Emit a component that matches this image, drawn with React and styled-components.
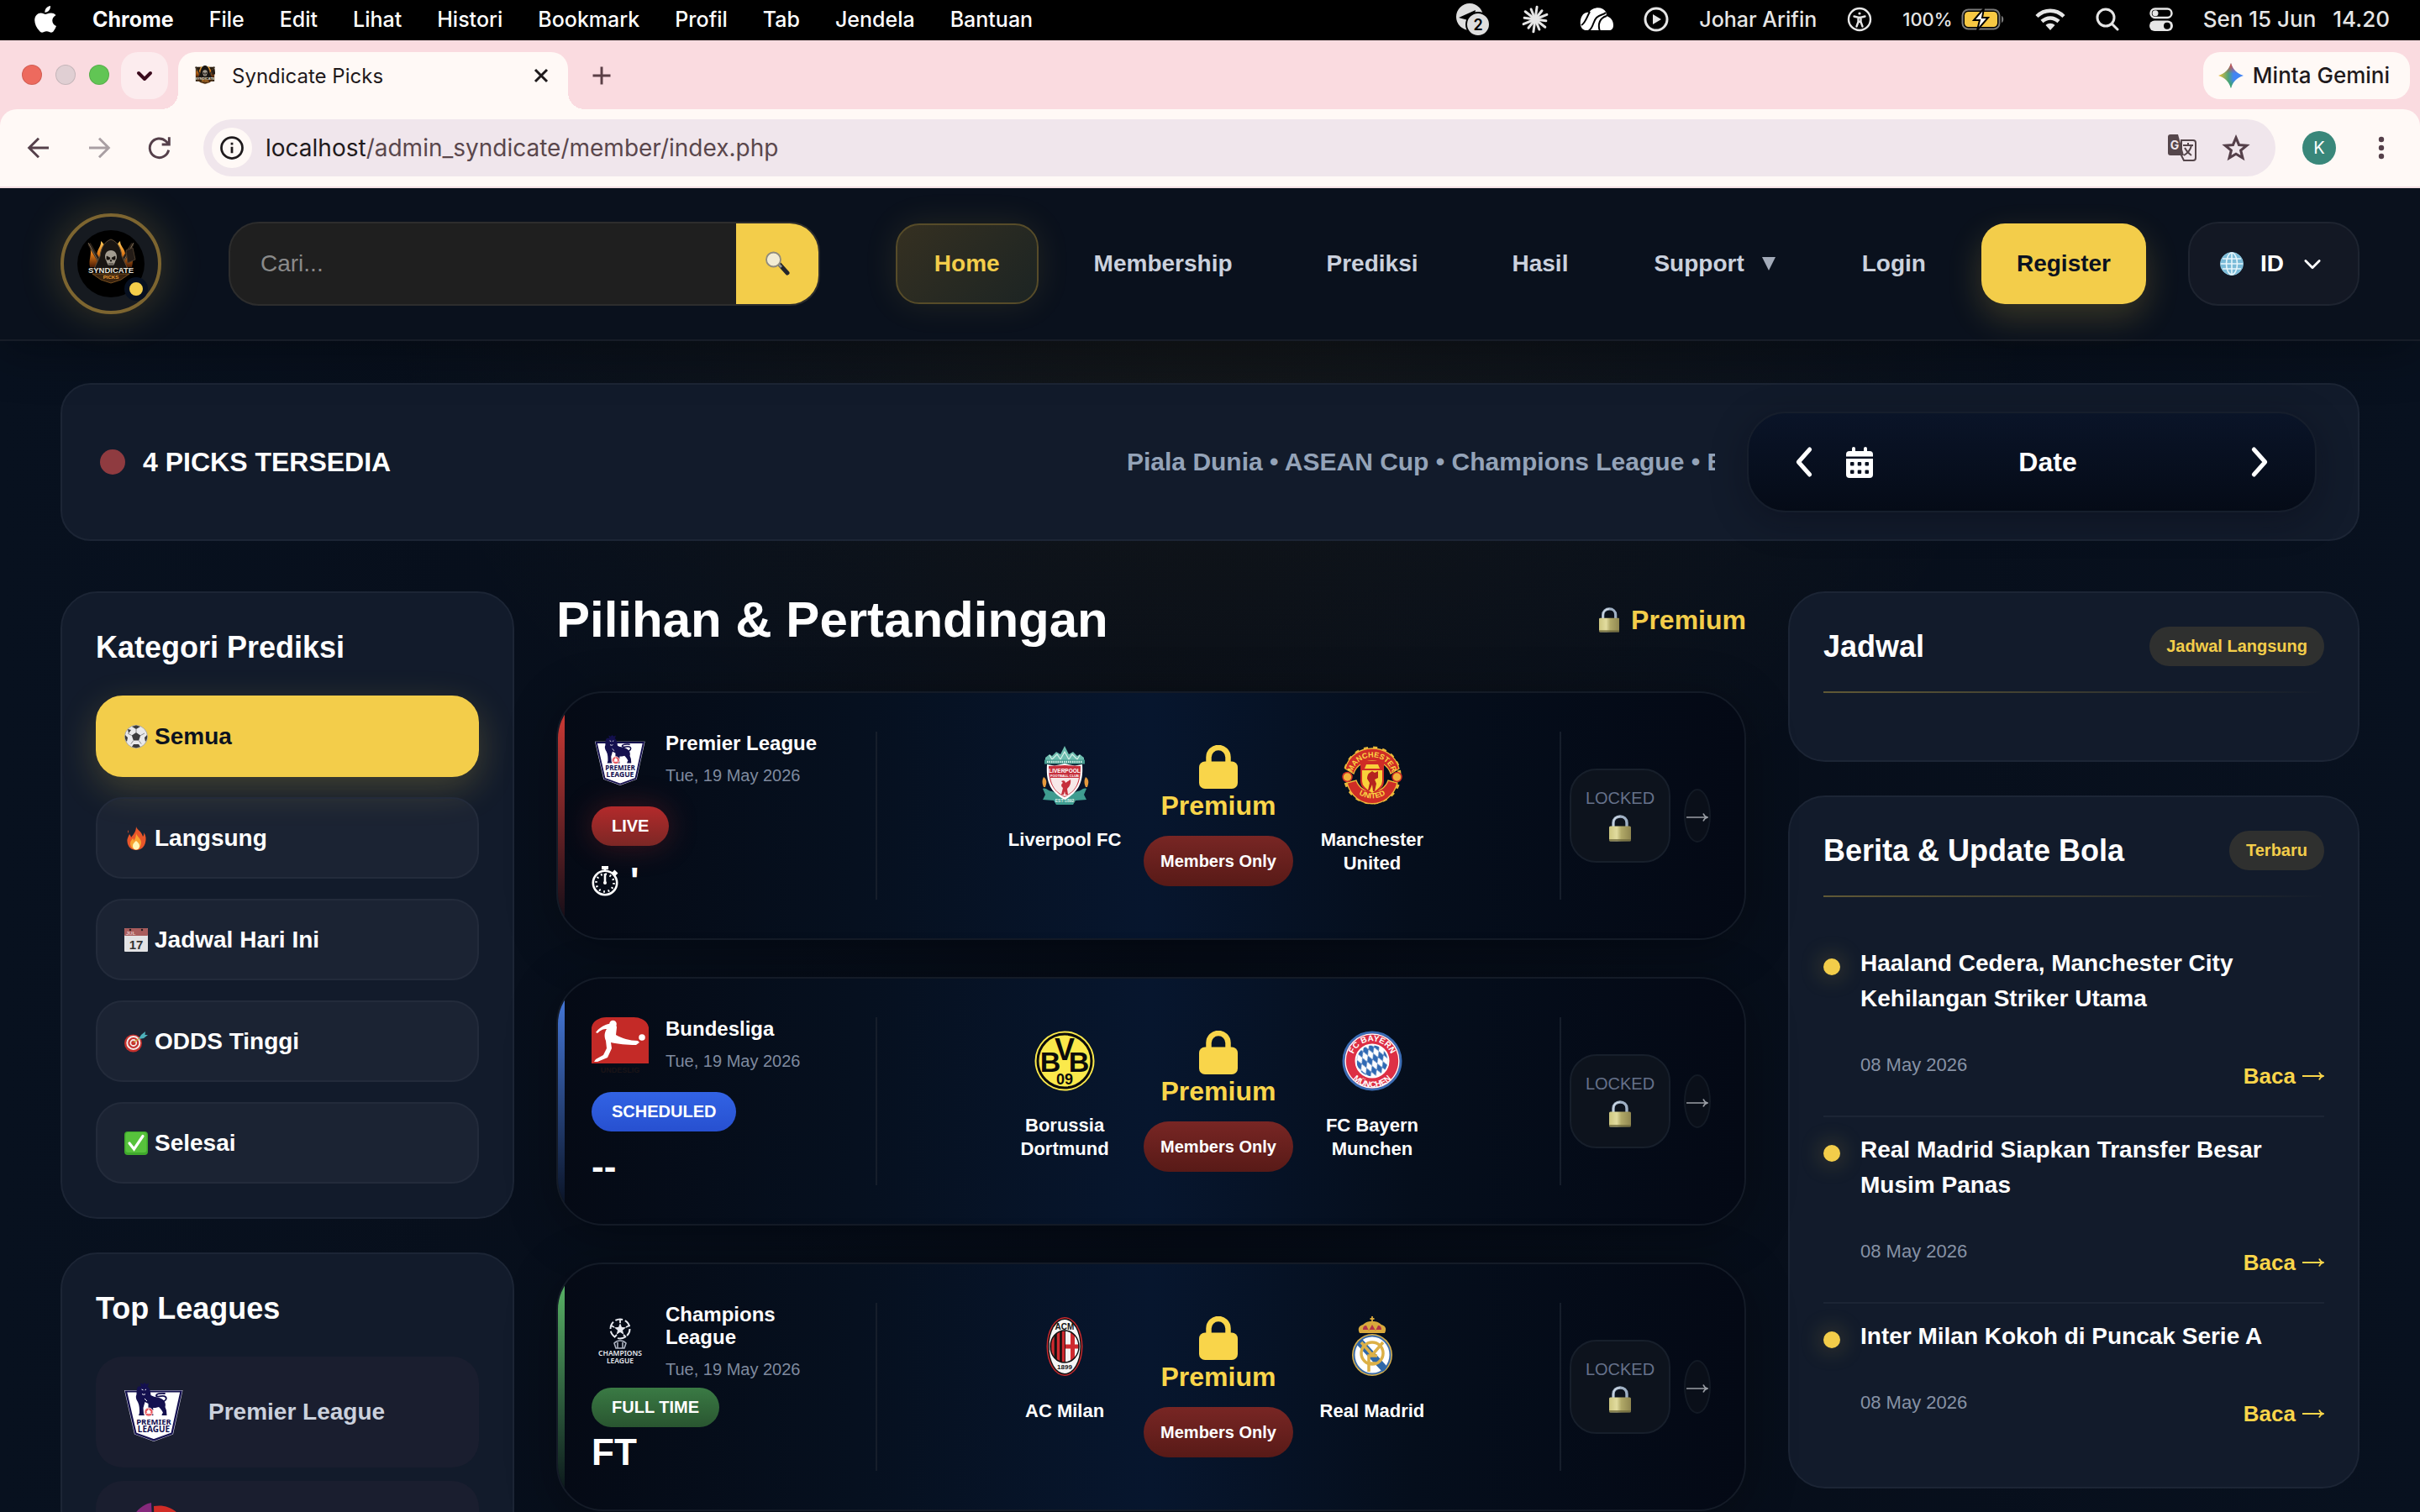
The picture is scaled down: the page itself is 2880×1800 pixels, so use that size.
import React from "react";
import styled, { createGlobalStyle, css } from "styled-components";

const sans = `"Liberation Sans", Arial, sans-serif`;
const system = `Inter, "Noto Sans", sans-serif`;
const gold = "#f3cd4a";

const GlobalStyle = createGlobalStyle`
  *, *::before, *::after { box-sizing: border-box; }
  body { margin: 0; background: #070e1a; font-family: ${sans}; color: #fff; }
  button, input { font: inherit; color: inherit; margin: 0; }
  h1, h2, h3, p, ul { margin: 0; padding: 0; }
  li { list-style: none; }
  a { color: inherit; text-decoration: none; }
  svg { display: block; flex: none; }
`;

/* ---------- desktop menu bar ---------- */

const Screen = styled.div`
  height: 100vh;
  display: flex;
  flex-direction: column;
  overflow: hidden;
`;

const MenuBar = styled.nav`
  flex: none;
  height: 48px;
  display: flex;
  align-items: center;
  justify-content: space-between;
  padding: 0 36px 2px 40px;
  background: #000;
  color: #fff;
  font: 500 25px/46px ${system};
`;

const MenuGroup = styled.div`
  display: flex;
  align-items: center;
  gap: 42px;
`;

const TrayGroup = styled.div`
  display: flex;
  align-items: center;
  gap: 36px;
  color: #e6e6e6;
`;

const MenuItem = styled.span`
  font-weight: ${(p) => (p.$strong ? 700 : 500)};
`;

const Battery = styled.span`
  display: flex;
  align-items: center;
  gap: 10px;
  font-size: 22px;
`;

const Clock = styled.span`
  display: flex;
  gap: 20px;
  font-size: 26px;
`;

/* ---------- browser window ---------- */

const TabStrip = styled.div`
  flex: none;
  height: 82px;
  display: flex;
  align-items: flex-start;
  padding: 14px 12px 0 26px;
  background: #fadbe0;
  font-family: ${system};
  color: #1f1a1c;
`;

const Lights = styled.div`
  height: 54px;
  display: flex;
  align-items: center;
  gap: 16px;
`;

const Light = styled.span`
  width: 24px;
  height: 24px;
  border-radius: 50%;
  border: 1px solid rgba(0, 0, 0, 0.12);
  background: ${(p) => p.$color};
`;

const TabSearch = styled.button`
  width: 56px;
  height: 56px;
  margin: 0 12px 0 14px;
  padding: 0;
  display: grid;
  place-items: center;
  border: 0;
  border-radius: 20px;
  background: #fcecee;
  color: #3a0a1c;
`;

const Tab = styled.div`
  position: relative;
  width: 464px;
  height: 68px;
  display: flex;
  align-items: center;
  padding: 0 20px 12px;
  border-radius: 20px 20px 0 0;
  background: #fff9f6;
  font-size: 24px;

  &::before,
  &::after {
    content: "";
    position: absolute;
    bottom: 0;
    width: 20px;
    height: 20px;
  }
  &::before {
    right: 100%;
    background: radial-gradient(circle at 0 0, transparent 20px, #fff9f6 20px);
  }
  &::after {
    left: 100%;
    background: radial-gradient(circle at 100% 0, transparent 20px, #fff9f6 20px);
  }
`;

const TabTitle = styled.span`
  flex: 1;
  padding-left: 20px;
`;

const PlainButton = styled.button`
  padding: 0;
  border: 0;
  background: none;
  display: grid;
  place-items: center;
`;

const NewTab = styled(PlainButton)`
  width: 56px;
  height: 56px;
  margin-left: 12px;
  color: #5b3f46;
`;

const Gemini = styled.button`
  height: 56px;
  margin-left: auto;
  padding: 0 24px 0 18px;
  display: flex;
  align-items: center;
  gap: 11px;
  border: 0;
  border-radius: 20px;
  background: #fff9f6;
  font: 500 26px/56px ${system};
`;

const ToolbarBack = styled.div`
  flex: none;
  background: #fadbe0;
`;

const Toolbar = styled.div`
  height: 94px;
  display: flex;
  align-items: center;
  padding: 0 42px 0 30px;
  border-radius: 20px 20px 0 0;
  border-bottom: 2px solid #f3dfe2;
  background: #fff9f6;
  color: #55404a;
  font-family: ${system};
`;

const ToolbarNav = styled.div`
  display: flex;
  gap: 40px;
  margin-right: 36px;
`;

const Omnibox = styled.div`
  flex: 1;
  height: 68px;
  display: flex;
  align-items: center;
  gap: 16px;
  padding: 0 30px 0 10px;
  border-radius: 34px;
  background: #f0e6ec;
`;

const SiteInfo = styled(PlainButton)`
  width: 48px;
  height: 48px;
  border-radius: 50%;
  background: #fff9f6;
  color: #1f1a1c;
`;

const Address = styled.p`
  flex: 1;
  font: 400 28px/36px ${system};
  color: #5a474c;
  b {
    font-weight: 400;
    color: #1f1a1c;
  }
`;

const OmniIcons = styled.div`
  display: flex;
  gap: 30px;
`;

const Avatar = styled.span`
  width: 40px;
  height: 40px;
  margin: 0 50px 0 32px;
  border-radius: 50%;
  background: #39877a;
  color: #fff;
  font-size: 20px;
  line-height: 40px;
  text-align: center;
`;

/* ---------- site header ---------- */

const Site = styled.div`
  flex: 1;
  min-height: 0;
  overflow: hidden;
  background:
    radial-gradient(ellipse 1000px 800px at 50% 90px, rgba(243, 205, 74, 0.06), transparent 100%),
    linear-gradient(90deg, #08111f, #060c17 50%, #08111f);
`;

const Header = styled.header`
  position: relative;
  height: 182px;
  display: flex;
  align-items: center;
  padding: 0 72px;
  border-bottom: 2px solid #171d28;
  background: #0a111d;
  box-shadow: 0 10px 60px rgba(0, 0, 0, 0.35);
`;

const LogoRing = styled.a`
  position: relative;
  width: 120px;
  height: 120px;
  margin-right: 80px;
  display: grid;
  place-items: center;
  border: 4px solid #7d6530;
  border-radius: 50%;
  background: #161a20;
  box-shadow: 0 0 50px rgba(243, 205, 74, 0.22);
`;

const OnlineDot = styled.span`
  position: absolute;
  right: 12px;
  bottom: 12px;
  width: 28px;
  height: 28px;
  border: 6px solid #071020;
  border-radius: 50%;
  background: ${gold};
`;

const Search = styled.form`
  flex: 1;
  min-width: 300px;
  height: 100px;
  display: flex;
  margin-right: 90px;
  overflow: hidden;
  border: 2px solid #2d2d2d;
  border-radius: 36px;
  background: #1f1f1f;
`;

const SearchInput = styled.input`
  flex: 1;
  min-width: 0;
  padding: 0 36px;
  border: 0;
  outline: 0;
  background: none;
  font-size: 28px;
  &::placeholder {
    color: #8a8a8a;
    opacity: 1;
  }
`;

const SearchButton = styled(PlainButton)`
  width: 98px;
  background: ${gold};
`;

const Nav = styled.nav`
  display: flex;
  gap: 20px;
  margin-right: 50px;
`;

const navItem = css`
  height: 96px;
  display: flex;
  align-items: center;
  border: 2px solid transparent;
  border-radius: 28px;
  color: #cbd1dd;
  font-size: 28px;
  font-weight: 700;
`;

const NavLink = styled.a`
  ${navItem}
  padding: 0 44px;
  ${(p) =>
    p.$active &&
    css`
      border-color: #574c29;
      background: linear-gradient(135deg, #353021, #1c2423);
      box-shadow: 0 0 40px rgba(243, 205, 74, 0.1);
      color: ${gold};
    `}
`;

const NavMenu = styled.button`
  ${navItem}
  padding: 0 34px;
  gap: 20px;
  background: none;
`;

const Register = styled.a`
  ${navItem}
  padding: 0 40px;
  background: ${gold};
  box-shadow: 0 16px 40px rgba(243, 205, 74, 0.2);
  color: #0b1220;
`;

const Language = styled.button`
  height: 100px;
  display: flex;
  align-items: center;
  padding: 0 40px 0 36px;
  border: 2px solid #1e2430;
  border-radius: 36px;
  background: #131824;
  font-size: 28px;
  font-weight: 700;
  gap: 20px;
`;

/* ---------- page body ---------- */

const Page = styled.main`
  padding: 50px 72px;
`;

const panel = css`
  border: 2px solid #1c2535;
  background: #121b2b;
`;

const StatusBar = styled.section`
  ${panel}
  height: 188px;
  display: flex;
  align-items: center;
  margin-bottom: 60px;
  padding: 0 49px 0 45px;
  border-radius: 36px;
`;

const LiveDot = styled.span`
  width: 30px;
  height: 30px;
  margin-right: 21px;
  border-radius: 50%;
  background: #8f3b40;
`;

const StatusText = styled.h2`
  font-size: 32px;
`;

const Ticker = styled.p`
  flex: 0 0 700px;
  margin: 0 38px 0 auto;
  overflow: hidden;
  white-space: nowrap;
  color: #94a3b8;
  font-size: 30px;
  font-weight: 700;
  line-height: 44px;
`;

const DateBox = styled.div`
  width: 678px;
  height: 120px;
  display: flex;
  align-items: center;
  padding: 0 46px;
  border: 2px solid #161e2c;
  border-radius: 46px;
  background: linear-gradient(#0a1428, #050b17);
  box-shadow: 0 10px 40px rgba(8, 10, 20, 0.35);
`;

const DateButton = styled.button`
  flex: 1;
  display: flex;
  align-items: center;
  padding: 0 24px 0 30px;
  border: 0;
  background: none;
  font-size: 32px;
  font-weight: 700;
`;

const DateLabel = styled.span`
  flex: 1;
  text-align: center;
`;

const Columns = styled.div`
  display: grid;
  grid-template-columns: 540px minmax(0, 1fr) 680px;
  gap: 50px;
  align-items: start;
`;

const Stack = styled.div`
  display: flex;
  flex-direction: column;
  gap: 40px;
`;

const Panel = styled.section`
  ${panel}
  padding: 40px;
  border-radius: 44px;
`;

const PanelTitle = styled.h2`
  font-size: 36px;
  line-height: 50px;
  margin-bottom: 32px;
`;

const CategoryList = styled.div`
  display: flex;
  flex-direction: column;
  gap: 24px;
`;

const Category = styled.button`
  height: 97px;
  display: flex;
  align-items: center;
  gap: 8px;
  padding: 0 32px;
  border: 2px solid #232b3b;
  border-radius: 32px;
  background: rgba(255, 255, 255, 0.04);
  font-size: 28px;
  font-weight: 700;
  ${(p) =>
    p.$active &&
    css`
      border-color: ${gold};
      background: ${gold};
      box-shadow: 0 14px 44px rgba(243, 205, 74, 0.22);
      color: #0b1220;
    `}
`;

const LeagueList = styled.div`
  display: flex;
  flex-direction: column;
  gap: 16px;
`;

const LeagueLink = styled.a`
  height: 132px;
  display: flex;
  align-items: center;
  gap: 30px;
  padding: 0 34px;
  border-radius: 32px;
  background: #1a1e2f;
  color: #cbd1dd;
  font-size: 28px;
  font-weight: 700;
`;

/* ---------- matches ---------- */

const MatchHead = styled.div`
  height: 68px;
  display: flex;
  align-items: center;
  justify-content: space-between;
  margin-bottom: 51px;
`;

const MatchHeading = styled.h1`
  font-size: 60px;
  line-height: 68px;
`;

const PremiumTag = styled.p`
  display: flex;
  align-items: center;
  gap: 14px;
  color: ${gold};
  font-size: 32px;
  font-weight: 700;
`;

const MatchList = styled.div`
  display: flex;
  flex-direction: column;
  gap: 44px;
`;

const MatchCard = styled.article`
  position: relative;
  height: 296px;
  display: grid;
  grid-template-columns: 340px minmax(0, 1fr) 180px;
  padding: 46px 40px;
  overflow: hidden;
  border: 2px solid #141b27;
  border-radius: 56px;
  background: linear-gradient(90deg, #050a15, #06101f 25%, #07162e 50%, #050e1c 72%, #040915);
  box-shadow: 0 10px 60px rgba(0, 0, 0, 0.3);

  &::before {
    content: "";
    position: absolute;
    inset: 0 auto 0 0;
    width: 8px;
    background: linear-gradient(${(p) => p.$accent}, transparent);
  }
`;

const MatchInfo = styled.div`
  display: flex;
  flex-direction: column;
  align-items: flex-start;
  justify-content: space-between;
  border-right: 2px solid #161e2b;
`;

const LeagueRow = styled.div`
  min-height: 68px;
  display: flex;
  gap: 20px;
`;

const LeagueBadge = styled.span`
  width: 68px;
  display: grid;
  place-items: center;
`;

const LeagueName = styled.h3`
  width: 190px;
  margin-bottom: 12px;
  font-size: 24px;
  line-height: 27px;
`;

const MatchDate = styled.p`
  color: #7f8a9f;
  font-size: 20px;
  line-height: 26px;
`;

const statusFill = {
  live: "linear-gradient(#b32a2b, #7c2725)",
  scheduled: "linear-gradient(#3263e4, #2750d0)",
  done: "linear-gradient(#3a7a44, #295530)",
};

const Status = styled.span`
  height: 47px;
  padding: 0 24px;
  border-radius: 24px;
  background: ${(p) => statusFill[p.$kind]};
  box-shadow: ${(p) => (p.$kind === "live" ? "0 0 36px rgba(190, 40, 40, 0.3)" : "none")};
  font-size: 20px;
  font-weight: 700;
  line-height: 47px;
`;

const MatchTime = styled.p`
  display: flex;
  align-items: center;
  gap: 12px;
  font-size: 44px;
  font-weight: 700;
  line-height: 44px;
`;

const Versus = styled.div`
  display: flex;
  align-self: center;
  justify-content: center;
  gap: 24px;
`;

const Team = styled.div`
  width: 140px;
  display: flex;
  flex-direction: column;
  align-items: center;
  gap: 27px;
  font-size: 22px;
  font-weight: 700;
  line-height: 28px;
  text-align: center;
`;

const Gate = styled.div`
  display: flex;
  flex-direction: column;
  align-items: center;
  color: #f9d54a;
  font-size: 32px;
  font-weight: 700;
  line-height: 40px;
`;

const MembersOnly = styled.a`
  height: 60px;
  margin-top: 16px;
  padding: 0 20px;
  border-radius: 30px;
  background: linear-gradient(#782624, #581a17);
  color: #fff;
  font-size: 20px;
  line-height: 60px;
`;

const MatchSide = styled.div`
  display: flex;
  align-items: center;
  justify-content: space-between;
  padding-left: 10px;
  border-left: 2px solid #161e2b;
`;

const LockedBox = styled.div`
  width: 120px;
  height: 112px;
  display: flex;
  flex-direction: column;
  align-items: center;
  justify-content: center;
  gap: 7px;
  padding-bottom: 4px;
  border: 2px solid #171f2b;
  border-radius: 32px;
  background: #0d131d;
  color: #65718a;
  font-size: 20px;
  line-height: 26px;
`;

const OpenMatch = styled.a`
  width: 32px;
  height: 64px;
  display: grid;
  place-items: center;
  padding-top: 4px;
  border: 2px solid #131a25;
  border-radius: 50%;
  background: #0a0f19;
  color: #9a9ea5;
`;

/* ---------- schedule and news ---------- */

const PanelHead = styled.div`
  display: flex;
  align-items: center;
  justify-content: space-between;
  margin-bottom: 40px;
  padding-bottom: 30px;
  border-bottom: 2px solid;
  border-image: linear-gradient(90deg, rgba(243, 205, 74, 0.35), transparent) 1;
`;

const PanelHeadTitle = styled.h2`
  font-size: 36px;
  line-height: 46px;
`;

const Chip = styled.span`
  height: 47px;
  padding: 0 20px;
  border-radius: 24px;
  background: #2f302f;
  color: ${gold};
  font-size: 20px;
  font-weight: 700;
  line-height: 47px;
`;

const NewsItem = styled.li`
  display: grid;
  grid-template-columns: 20px 1fr;
  column-gap: 24px;
  padding: 18px 0 16px;
  border-bottom: 2px solid #1c2535;
  &:last-child {
    border-bottom: 0;
  }
`;

const Bullet = styled.span`
  width: 20px;
  height: 20px;
  margin-top: 15px;
  border-radius: 50%;
  background: ${gold};
  box-shadow: 0 0 28px rgba(243, 205, 74, 0.35);
`;

const NewsTitle = styled.h3`
  font-size: 28px;
  line-height: 42px;
`;

const NewsMeta = styled.div`
  display: flex;
  align-items: flex-start;
  justify-content: space-between;
  margin-top: 40px;
`;

const NewsDate = styled.time`
  color: #8792a5;
  font-size: 22px;
  line-height: 36px;
`;

const ReadLink = styled.a`
  display: flex;
  align-items: center;
  gap: 8px;
  color: #f9d54a;
  font-size: 26px;
  font-weight: 700;
  line-height: 62px;
`;

/* ---------- drawings ---------- */

const AppleMark = () => (
  <svg width="28" height="32" viewBox="0 0 28 32" fill="#fff">
    <path d="M20 0c.3 2.200-.6 4.200-1.800 5.600-1.200 1.400-3 2.400-4.800 2.200-.3-2 .7-4.200 1.800-5.400C16.500 1 18.500.1 20 0z" />
    <path d="M26.500 11.100c-3 1.900-4.300 4.100-4.200 6.700.1 3 1.800 5 4.700 6.300-.8 2.300-2 4.300-3.400 6.100-1.200 1.500-2.600 1.800-4.300 1.100-3.200-1.300-4.600-1.200-7.600 0-1.800.7-3.200.4-4.600-1.200C1.200 23.800-.8 15 3.600 10.700c2.600-2.500 5.500-2.700 8.800-1.100 1.200.5 2.300.4 3.500 0 4.200-1.700 8-1.500 10.600 1.500z" />
  </svg>
);

const ChatBadge = () => (
  <svg width="42" height="38" viewBox="0 0 42 38">
    <circle cx="17" cy="16" r="16" fill="#dedede" />
    <path d="M4 17l20-9-4 18-5-6z" fill="#000" />
    <circle cx="27" cy="25" r="14" fill="#dedede" stroke="#000" strokeWidth="2" />
    <text x="27" y="32" textAnchor="middle" fontFamily="Inter, sans-serif" fontSize="18" fontWeight="600" fill="#000">2</text>
  </svg>
);

const Burst = () => (
  <svg width="34" height="34" viewBox="-17 -17 34 34" stroke="#e6e6e6" strokeWidth="3" strokeLinecap="round">
    {Array.from({ length: 12 }, (_, i) => (
      <line key={i} x1="0" y1="0" x2="0" y2={i % 2 ? -13 : -15} transform={`rotate(${i * 30 + 8})`} />
    ))}
  </svg>
);

const CloudMark = () => (
  <svg width="40" height="28" viewBox="0 0 40 28">
    <path d="M8 27C2 27 0 21 1 15 2 9 6 5 11 6 15-1 27-2 31 5c1 2 1 4 0 5 6 1 9 6 9 11 0 4-2 6-5 6z" fill="#fff" />
    <path d="M10 28c7-4 5-11 10-16 4-4 8-3 11-6M24 28c-3-8 0-16 8-18M2 21C7 18 8 12 12 5" fill="none" stroke="#000" strokeWidth="2" />
  </svg>
);

const PlayMark = () => (
  <svg width="30" height="30" viewBox="0 0 30 30">
    <circle cx="15" cy="15" r="13" fill="none" stroke="#e6e6e6" strokeWidth="3" />
    <path d="M11 9l10 6-10 6z" fill="#e6e6e6" />
  </svg>
);

const Accessibility = () => (
  <svg width="30" height="30" viewBox="0 0 30 30" stroke="#e6e6e6" fill="none" strokeWidth="2.400" strokeLinecap="round">
    <circle cx="15" cy="15" r="13" />
    <circle cx="15" cy="8" r="1.600" fill="#e6e6e6" stroke="none" />
    <path d="M8.500 11.500l5 1.200h3l5-1.200M13.500 13v5l-2 5.500M16.500 13v5l2 5.500M13.500 18h3" />
  </svg>
);

const BatteryMark = () => (
  <svg width="52" height="26" viewBox="0 0 52 26">
    <rect x="1.500" y="1.500" width="44" height="23" rx="7" fill="none" stroke="#7a7a7a" strokeWidth="2" />
    <rect x="4" y="4" width="39" height="18" rx="4.500" fill="#f7c843" />
    <path d="M48 9c3 1 3 7 0 8z" fill="#7a7a7a" />
    <path d="M27 0L15 14h7l-3 12 13-15h-7z" fill="#fff" stroke="#000" strokeWidth="2" />
  </svg>
);

const Wifi = () => (
  <svg width="36" height="27" viewBox="0 0 36 27" fill="none" stroke="#e6e6e6" strokeWidth="4.500">
    <path d="M2 9.500c9-9 23-9 32 0M8 15.500c6-5.500 14-5.500 20 0" />
    <path d="M18 26l-5.500-6c3-3 8-3 11 0z" fill="#e6e6e6" stroke="none" />
  </svg>
);

const Spotlight = () => (
  <svg width="28" height="28" viewBox="0 0 28 28" fill="none" stroke="#e6e6e6" strokeWidth="3" strokeLinecap="round">
    <circle cx="12" cy="12" r="10" />
    <path d="M19.500 19.500L26 26" />
  </svg>
);

const ControlCenter = () => (
  <svg width="28" height="28" viewBox="0 0 28 28">
    <rect x="1.500" y="1.500" width="25" height="10.500" rx="5.200" fill="none" stroke="#e6e6e6" strokeWidth="2.500" />
    <circle cx="7" cy="6.700" r="3.500" fill="#e6e6e6" />
    <rect x="0" y="15.500" width="28" height="12.500" rx="6.200" fill="#e6e6e6" />
    <circle cx="21" cy="21.700" r="4" fill="#000" />
  </svg>
);

const Stroke = ({ size = 28, width = 3, children, box = 24 }) => (
  <svg width={size} height={size} viewBox={`0 0 ${box} ${box}`} fill="none" stroke="currentColor" strokeWidth={width}>
    {children}
  </svg>
);

const Chevron = ({ dir, size = 28, width = 3 }) => {
  const paths = { down: "M5 9l7 7 7-7", left: "M16 3l-8 9 8 9", right: "M8 3l8 9-8 9" };
  return (
    <svg width={size} height={size} viewBox="0 0 24 24" fill="none" stroke="currentColor" strokeWidth={width} strokeLinecap="round" strokeLinejoin="round">
      <path d={paths[dir]} />
    </svg>
  );
};

const GeminiStar = () => (
  <svg width="30" height="30" viewBox="0 0 30 30">
    <defs>
      <linearGradient id="gemH" x1="0" x2="1">
        <stop offset="0" stopColor="#f6c02f" />
        <stop offset=".4" stopColor="#4fa37a" />
        <stop offset=".6" stopColor="#4285f4" />
        <stop offset="1" stopColor="#4285f4" />
      </linearGradient>
      <linearGradient id="gemV" x1="0" x2="0" y1="0" y2="1">
        <stop offset="0" stopColor="#ea4335" />
        <stop offset=".42" stopColor="#ea4335" stopOpacity="0" />
        <stop offset=".65" stopColor="#34a853" stopOpacity="0" />
        <stop offset="1" stopColor="#34a853" />
      </linearGradient>
    </defs>
    {["url(#gemH)", "url(#gemV)"].map((f) => (
      <path key={f} fill={f} d="M15 0c2 7.500 7.500 13 15 15-7.500 2-13 7.500-15 15-2-7.500-7.500-13-15-15C7.500 13 13 7.500 15 0z" />
    ))}
  </svg>
);

const Translate = () => (
  <svg width="34" height="34" viewBox="0 0 34 34">
    <path d="M16 8h14a3 3 0 013 3v18a3 3 0 01-3 3H19l-3-6z" fill="none" stroke="#55464b" strokeWidth="2" />
    <path d="M3 1h9l7 25H3a3 3 0 01-3-3V4a3 3 0 013-3z" fill="#55464b" />
    <text x="8" y="19" textAnchor="middle" fontFamily="Inter, sans-serif" fontSize="14" fontWeight="700" fill="#f0e6ec">G</text>
    <path d="M18 14h12M24 11v3M28 14c-1 5-4 9-9 12M20 17c2 4 5 7 8 9" fill="none" stroke="#55464b" strokeWidth="2" />
  </svg>
);

const SkullLogo = ({ size, bare }) => (
  <svg width={size} height={size} viewBox={bare ? "12 12 56 56" : "0 0 80 80"}>
    <defs>
      <linearGradient id="flame" x1="0" y1="0" x2="0" y2="1">
        <stop offset="0" stopColor="#ffcb5a" />
        <stop offset=".5" stopColor="#e07a18" />
        <stop offset="1" stopColor="#4a1c05" />
      </linearGradient>
    </defs>
    {bare ? <rect x="14" y="16" width="52" height="40" fill="#2a1c0e" /> : <circle cx="40" cy="40" r="40" fill="#000" />}
    <path d="M15 44c-2-10 3-14 0-25 6 4 6 9 8 12 0-8 6-12 5-18 5 4 5 8 6 12h12c2-5 0-8 5-12 0 6 5 8 6 15 3-4 3-8 8-10-2 10 3 14 0 26z" fill="url(#flame)" />
    <path d="M14 16l14 24M66 16L52 40" stroke="#2b2118" strokeWidth="4" />
    <path d="M13 15l13 24M67 15L54 39" stroke="#7a6a55" strokeWidth="1" />
    <path d="M58 24l8-3 3 14-9 4z" fill="#241c17" stroke="#4a3a2a" strokeWidth="1" />
    <path d="M40 11c9 3 12 12 13 20l7 15H20l7-15c1-8 4-17 13-20z" fill="#191512" stroke="#5c4a34" strokeWidth="1" />
    <path d="M40 24c5 0 7 4 7 8 0 3-2 4-2 6l-2 4h-6l-2-4c0-2-2-3-2-6 0-4 2-8 7-8z" fill="#a39c90" />
    <path d="M35 31l4 2-1 2h-3zM45 31l-4 2 1 2h3zM40 35l-1 2h2zM38 39v3M40 39v3M42 39v3" fill="#17120e" stroke="#17120e" strokeWidth=".8" />
    <text x="40" y="51" textAnchor="middle" fontFamily="Liberation Sans, sans-serif" fontSize="9.500" fontWeight="700" fill="#e6e1da">SYNDICATE</text>
    <path d="M18 52h44l-10 7-12 4-12-4z" fill="#3a2410" stroke="#8a5a22" strokeWidth=".8" />
    <text x="40" y="58" textAnchor="middle" fontFamily="Liberation Sans, sans-serif" fontSize="6" fontWeight="700" fill="#e79b34">PICKS</text>
  </svg>
);

const Magnifier = () => (
  <svg width="30" height="30" viewBox="0 0 30 30">
    <path d="M18 16l9 10" stroke="#24262b" strokeWidth="5" strokeLinecap="round" />
    <path d="M16 15l4 4" stroke="#8d9297" strokeWidth="3" />
    <circle cx="10.500" cy="10" r="8.500" fill="#f2ecd4" stroke="#8f8b7e" strokeWidth="1.800" />
  </svg>
);

const Globe = () => (
  <svg width="28" height="28" viewBox="0 0 28 28" fill="none" stroke="#e6f5fb" strokeWidth="1.600">
    <circle cx="14" cy="14" r="13.500" fill="#7abbd8" stroke="#8cc5de" strokeWidth="1" />
    <ellipse cx="14" cy="14" rx="6.500" ry="13" />
    <path d="M14 1v26M1 14h26M3 8h22M3 20h22" />
  </svg>
);

const Padlock = ({ size = 32 }) => (
  <svg width={(size * 26) / 32} height={size} viewBox="0 0 26 32">
    <defs>
      <linearGradient id="brass" x1="0" x2="1">
        <stop offset="0" stopColor="#cdc67f" />
        <stop offset=".35" stopColor="#e2dc9f" />
        <stop offset=".55" stopColor="#b1a968" />
        <stop offset="1" stopColor="#8f8650" />
      </linearGradient>
    </defs>
    <path d="M5 15V9.500C5 5 8.500 2 13 2s8 3 8 7.500V15" fill="none" stroke="#9fb0c4" strokeWidth="3.400" />
    <path d="M5 15V9.500C5 5 8.500 2 13 2" fill="none" stroke="#d9e2ec" strokeWidth="1.200" />
    <rect x="0" y="13.500" width="26" height="18" rx="1.500" fill="url(#brass)" />
    <path d="M0 30h26" stroke="#6e683c" strokeWidth="1.500" />
  </svg>
);

const BigLock = () => (
  <svg width="46" height="52" viewBox="0 0 46 52">
    <path d="M11.500 22V14.500a11.500 11.500 0 0123 0V22" fill="none" stroke="#f9d54a" strokeWidth="6.500" />
    <rect y="19.500" width="46" height="32.500" rx="7" fill="#f9d54a" />
  </svg>
);

const Arrow = ({ weight = 1.6 }) => (
  <svg width="26" height="14" viewBox="0 0 26 14" fill="none" stroke="currentColor" strokeWidth={weight}>
    <path d="M0 7h24M20 2.500c.8 2 2.600 3.800 5 4.500-2.400.7-4.200 2.500-5 4.500" />
  </svg>
);

const Calendar = () => (
  <svg width="32" height="37" viewBox="0 0 32 37">
    <path d="M9 6V2M23 6V2" stroke="#fff" strokeWidth="4" strokeLinecap="round" />
    <path d="M4 5h24a4 4 0 014 4v2.500H0V9a4 4 0 014-4z" fill="#fff" />
    <path d="M0 14h32v19a4 4 0 01-4 4H4a4 4 0 01-4-4z" fill="#fff" />
    {[18, 27.5].map((y) => [5, 13.7, 22.5].map((x) => <rect key={`${x}-${y}`} x={x} y={y} width="4.500" height="4.500" rx="1" fill="#08101f" />))}
  </svg>
);

const Stopwatch = () => (
  <svg width="34" height="36" viewBox="0 0 34 36" fill="none" stroke="#fff">
    <circle cx="16" cy="20" r="14.200" strokeWidth="2.600" />
    <circle cx="16" cy="20" r="10.500" strokeWidth="2.600" strokeDasharray="1.800 3.700" />
    <path d="M16 20V9M16 5V1" strokeWidth="2.600" />
    <path d="M12 2h8M26 6l4 4" strokeWidth="4" />
    <circle cx="16" cy="20" r="2" fill="#fff" stroke="none" />
  </svg>
);

const Ball = () => (
  <svg width="28" height="28" viewBox="0 0 28 28">
    <circle cx="14" cy="14" r="13.500" fill="#e9e9ea" stroke="#9b9b9d" strokeWidth=".8" />
    <path d="M14 9l5.200 3.600-2 6h-6.400l-2-6z" fill="#3b3b3d" />
    <path d="M9 2l5 3 5-3-5-1.400zM1 12l3 3-1 5c-2-2-2.500-5-2-8zM27 12l-3 3 1 5c2-2 2.500-5 2-8zM9 26l2-3h6l2 3c-3 1.500-7 1.500-10 0zM4 5l4 1-3 4z" fill="#3b3b3d" />
    <path d="M14 9V5M19.200 12.600L24 10M17.200 18.600l3 4M10.800 18.600l-3 4M8.800 12.600L4 10" stroke="#8a8a8c" fill="none" />
  </svg>
);

const Fire = () => (
  <svg width="28" height="28" viewBox="0 0 28 28">
    <path d="M14 0c1 4 7 6 8 12 1-1 1.500-3 1-5 3 4 3 8 2 12-1 5-5 9-11 9S4 24 3.500 18C3 14 5 12 6 9c1 1 2 3 2 4 3-4 6-7 6-13z" fill="#e8562a" />
    <path d="M14 8c1 4 6 6 6 11 0 5-3 8.500-6 8.500S7 25 7 20c0-3 2-4 3-6 1 1 1 2 1 3 2-2 3-5 3-9z" fill="#f7a430" />
    <path d="M14 17c2 2 4 3 4 6s-2 4.500-4 4.500-4-1.500-4-4.500 2-4 4-6z" fill="#fff6b8" />
    <path d="M4 6l1-2v4z" fill="#e8562a" />
  </svg>
);

const CalendarDay = () => (
  <svg width="28" height="28" viewBox="0 0 28 28">
    <rect width="28" height="28" rx="1" fill="#e3e3e5" />
    <rect width="28" height="9" rx="1" fill="#a95c5c" />
    <text x="2" y="8" fontFamily="Liberation Sans, sans-serif" fontSize="6" fill="#e3c4c4">JUL</text>
    <circle cx="7" cy="2" r="1.200" fill="#2c2022" />
    <circle cx="21" cy="2" r="1.200" fill="#2c2022" />
    <text x="14" y="24.500" textAnchor="middle" fontFamily="Liberation Sans, sans-serif" fontSize="15" fill="#333">17</text>
  </svg>
);

const Target = () => (
  <svg width="28" height="28" viewBox="0 0 28 28">
    <ellipse cx="10.500" cy="16" rx="10.500" ry="10.500" fill="#c5302c" />
    <circle cx="10.800" cy="15.500" r="7.500" fill="none" stroke="#f3e8e6" strokeWidth="2" />
    <circle cx="10.800" cy="15.500" r="3.500" fill="none" stroke="#f3e8e6" strokeWidth="1.800" />
    <path d="M11 15L22 7" stroke="#c9a53f" strokeWidth="1.500" />
    <path d="M17 11l3-5 5-4-.5 4L28 6l-5 4z" fill="#4eb1bb" />
  </svg>
);

const Check = () => (
  <svg width="28" height="28" viewBox="0 0 28 28">
    <rect width="28" height="28" rx="4" fill="#3fa92c" />
    <rect x="1.500" y="1" width="25" height="24" rx="3" fill="#57c23c" />
    <path d="M6 14l5.500 7L22 5.500" fill="none" stroke="#fff" strokeWidth="3.200" strokeLinecap="round" />
  </svg>
);

const PremierCrest = ({ size }) => (
  <svg width={size} height={size} viewBox="0 0 70 70">
    <path d="M0 9h69.500L58 61.500 35 70 12 61.500z" fill="#d9d9e4" />
    <path d="M2 10.500h65.500L56.500 60.500 35 68.300 13.500 60.500z" fill="#fff" stroke="#14104f" strokeWidth="2.200" />
    <path d="M20 4.500L19 .5l3 1.500 2-2 2 2 3-1.500-1 4z" fill="#14104f" />
    <path d="M19.500 4.500c3-1 6-1 8.500.5 2.500 2 3 6 3.500 10 4 2.500 10 2 14 5 3 2 4 6 3 9l1.500 4 .5 6h-6l.5-2 1-1c-1-3-3-5-5-7-3 1-5 1-7 1 1 2 0 3-.5 4l1 5h-6V25l-4-2-2 7 .5 7 1 2h-7l1-3c0-5 0-9-2-13-2-3-3-6-1.500-9 0-4 0-7.500 2-9.500z" fill="#14104f" />
    <path d="M45 23c4-1 6-4 4-6-3-3-8 1-11-1-1-3 6-3.500 10-3" fill="none" stroke="#14104f" strokeWidth="1.800" strokeLinecap="round" />
    <path d="M20.500 8l2 .8M26 8l-1.500.8M21 13.500c1.500 1 3 1 4 0M24 19l3 3" fill="none" stroke="#fff" strokeWidth="1" />
    <circle cx="29" cy="35" r="5" fill="#e85259" stroke="#f7d5d8" strokeWidth="1" />
    <path d="M29 32.500l2.200 1.700-.8 2.600h-2.800l-.8-2.600zM25.500 37l2-1M32.500 37l-2-1M29 30.500v2" fill="#fff" stroke="#fff" strokeWidth=".8" />
    <text x="35" y="49.500" textAnchor="middle" fontFamily="Noto Sans, sans-serif" fontSize="9.500" fontWeight="700" fill="#14104f">PREMIER</text>
    <text x="35" y="58.800" textAnchor="middle" fontFamily="Noto Sans, sans-serif" fontSize="10" fontWeight="700" fill="#14104f">LEAGUE</text>
  </svg>
);

const BundesligaCrest = () => (
  <svg width="68" height="68" viewBox="0 0 68 68">
    <path d="M18 0h32a18 14 0 0118 12v43H0V12A18 14 0 0118 0z" fill="#c42a27" />
    <circle cx="60" cy="24" r="3.800" fill="#fff" />
    <circle cx="25.500" cy="8" r="4.300" fill="#fff" />
    <path d="M20 8c-7 2-11 5-15 10l2 1c4-4 7-5 11-5-3 5-3 9-1 14l1 9-4 8-9 5-2 3h4l12-5 5-11-1-7c9 2 18 3 30 3l4-3-2-2c-10 0-19-3-26-7l1-9c0-3-4-5-10-4z" fill="#fff" />
    <text x="34" y="66" textAnchor="middle" fontFamily="Liberation Sans, sans-serif" fontSize="9" fontWeight="700" fill="#1a1417">UNDESLIG</text>
  </svg>
);

const ChampionsCrest = () => (
  <svg width="66" height="68" viewBox="0 0 66 68" fill="#e8eaf0">
    <circle cx="33" cy="19" r="11.500" fill="none" stroke="#e8eaf0" strokeWidth="2" strokeDasharray="9 3" />
    <path d="M33 12l2 5 5 .3-4 3.400 1.400 5L33 23l-4.400 2.700 1.400-5-4-3.400 5-.3z" />
    <path d="M33 12V8M40 17l4-2M37 26l3 3M29 26l-3 3M26 17l-4-2" stroke="#e8eaf0" strokeWidth="1.800" />
    <path d="M26 36c4-4 10-4 14 0l-2 6H28zM30 35v7M36 35v7" fill="none" stroke="#aeb4c2" strokeWidth="1.600" />
    <text x="33" y="51" textAnchor="middle" fontFamily="Noto Sans, sans-serif" fontSize="8.500" fontWeight="600">CHAMPIONS</text>
    <text x="33" y="59.500" textAnchor="middle" fontFamily="Noto Sans, sans-serif" fontSize="8.500" fontWeight="600">LEAGUE</text>
  </svg>
);

const LaLigaCrest = () => (
  <svg width="70" height="80" viewBox="0 0 70 80">
    <path d="M34 40L12 14C18 5 26 1 32 0z" fill="#85297c" />
    <path d="M36 40L35 4C46 2 56 5 64 13L52 34z" fill="#d12c26" />
    <path d="M36 42l28-24c7 18-2 40-18 46z" fill="#f08b2b" />
    <path d="M32 42L9 18C0 34 4 54 16 66z" fill="#2a72b8" />
  </svg>
);

const LiverpoolCrest = () => (
  <svg width="72" height="72" viewBox="0 0 72 72">
    <path d="M13 15l5-4 3 2 5-5 5 3 5-10 5 10 5-3 5 5 3-2 5 4v7H13z" fill="#6cbcae" />
    <path d="M18 12l3 5 6-6 4 6 5-9 5 9 4-6 6 6 3-5" fill="none" stroke="#d6efe8" strokeWidth="1.200" />
    <rect x="12" y="17.500" width="48" height="5" fill="#459a8d" />
    <path d="M15 20h42" stroke="#cfeee6" strokeWidth="2.400" strokeDasharray="1.500 1" />
    <path d="M10 52c4-2 6 3 11 3l15 7 15-7c5 0 7-5 11-3l-3 7 3 6-13 1-3 5H26l-3-5-13-1 3-6z" fill="#3f9c90" />
    <path d="M15 23l9 1.500L36 22l12 2.500 9-1.500c1 16-1 32-21 42C16 55 14 39 15 23z" fill="#fff" />
    <path d="M17 25l19-1 19 1c0 14-1 28-19 37C18 53 17 39 17 25z" fill="#c62f3c" />
    <path d="M19 39h34c-2 10-6 17-17 22-11-5-15-12-17-22z" fill="#f7e9e9" />
    <text x="36" y="32.500" textAnchor="middle" fontFamily="Liberation Sans, sans-serif" fontSize="6.500" fontWeight="700" fill="#fff">LIVERPOOL</text>
    <text x="36" y="37.500" textAnchor="middle" fontFamily="Liberation Sans, sans-serif" fontSize="4" fontWeight="700" fill="#fff">FOOTBALL CLUB</text>
    <path d="M32 43c3-2 5 0 5 2l6-4c1 6-2 9-4 11l1 7h-3l-1-4-1 4h-3l2-8c-3-2-2-5 0-6z" fill="#c62f3c" />
    <path d="M11 38c4 3 4 6 2 12h-2c-2-5-2-8 0-12zM61 38c4 3 4 6 2 12h-2c-2-5-2-8 0-12z" fill="#e59a3c" />
    <text x="36" y="68" textAnchor="middle" fontFamily="Liberation Sans, sans-serif" fontSize="5" fill="#dff4ee">EST·1892</text>
  </svg>
);

const UnitedCrest = () => (
  <svg width="72" height="72" viewBox="0 0 72 72">
    <defs>
      <path id="muTop" d="M12.500 32a24.500 24.500 0 0147 0" />
      <path id="muBottom" d="M9 44a28.500 28.500 0 0054 0" />
    </defs>
    <circle cx="36" cy="36" r="32.500" fill="none" stroke="#e9b93a" strokeWidth="4" strokeDasharray="5 6" />
    <path d="M4 28C12 -4 60 -4 68 28l-10 6C52 14 20 14 14 34z" fill="#cf2c26" stroke="#f0b93a" strokeWidth="1.300" />
    <path d="M6 45c9 33 51 33 60 0l-11-3c-6 18-32 18-38 0z" fill="#cf2c26" stroke="#f0b93a" strokeWidth="1.300" />
    <path d="M23 20h26v23c0 6-4 10-13 15-9-5-13-9-13-15z" fill="#f9d13b" stroke="#cf2c26" strokeWidth="2" />
    <path d="M24 21h24v9H24z" fill="#cf2c26" />
    <path d="M27 28l2-5h14l2 5z" fill="#f9d13b" />
    <path d="M33 33l3-2 3 2 4-2v8l-4 2 2 5-2 9h-2l-1-8-3 7h-2l2-9-3-5c0-3 1-6 3-7z" fill="#b5231f" />
    <circle cx="6.500" cy="38" r="5.500" fill="#f2b23a" stroke="#cf2c26" strokeWidth="1.500" />
    <circle cx="65.500" cy="38" r="5.500" fill="#f2b23a" stroke="#cf2c26" strokeWidth="1.500" />
    <g fontFamily="Liberation Sans, sans-serif" fontWeight="700" fill="#fbd645">
      <text fontSize="9" textAnchor="middle">
        <textPath href="#muTop" startOffset="50%">MANCHESTER</textPath>
      </text>
      <text fontSize="9" textAnchor="middle">
        <textPath href="#muBottom" startOffset="50%">UNITED</textPath>
      </text>
    </g>
  </svg>
);

const DortmundCrest = () => (
  <svg width="72" height="72" viewBox="0 0 72 72">
    <circle cx="36" cy="36" r="35.500" fill="#fbe94b" />
    <circle cx="36" cy="36" r="32" fill="#fbe94b" stroke="#0b0b0b" strokeWidth="3" />
    <g fontFamily="Liberation Sans, sans-serif" fontWeight="700" fill="#0b0b0b" textAnchor="middle">
      <text x="19" y="49" fontSize="34">B</text>
      <text x="53" y="49" fontSize="34">B</text>
      <text x="36" y="35" fontSize="36">V</text>
      <text x="36" y="64" fontSize="18">09</text>
    </g>
  </svg>
);

const BayernCrest = () => (
  <svg width="72" height="72" viewBox="0 0 72 72">
    <defs>
      <pattern id="loz" width="7" height="13" patternUnits="userSpaceOnUse" patternTransform="rotate(-22)">
        <rect width="7" height="13" fill="#fff" />
        <path d="M3.500 0L7 6.500 3.500 13 0 6.500z" fill="#2f69b3" />
      </pattern>
      <path id="fcbTop" d="M12.500 40a23.800 23.800 0 1147 0" />
      <path id="fcbBottom" d="M5.500 37a30.500 30.500 0 0061 0" />
    </defs>
    <circle cx="36" cy="36" r="34" fill="#dd2f45" stroke="#3a6cb4" strokeWidth="3" />
    <circle cx="36" cy="36" r="31.800" fill="none" stroke="#fff" strokeWidth="1.300" />
    <circle cx="36" cy="36" r="19.500" fill="url(#loz)" stroke="#fff" strokeWidth="2" />
    <g fontFamily="Liberation Sans, sans-serif" fontWeight="700" fill="#fff" fontSize="10">
      <text textAnchor="middle">
        <textPath href="#fcbTop" startOffset="50%">FC BAYERN</textPath>
      </text>
      <text textAnchor="middle">
        <textPath href="#fcbBottom" startOffset="50%">MÜNCHEN</textPath>
      </text>
    </g>
  </svg>
);

const MilanCrest = () => (
  <svg width="72" height="72" viewBox="0 0 72 72">
    <defs>
      <clipPath id="milan">
        <ellipse cx="36" cy="36" rx="17" ry="19" />
      </clipPath>
    </defs>
    <ellipse cx="36" cy="36" rx="21.500" ry="35" fill="#c7292e" />
    <ellipse cx="36" cy="36" rx="20" ry="33.500" fill="#111" />
    <ellipse cx="36" cy="36" rx="18.500" ry="32" fill="#f5f5f5" />
    <g clipPath="url(#milan)">
      <rect x="16" y="16" width="40" height="40" fill="#111" />
      <path d="M22 16v40M28.500 16v40M34.500 16v40" stroke="#cf2a2f" strokeWidth="3.400" />
      <rect x="37" y="16" width="20" height="40" fill="#f5f5f5" />
      <path d="M45.500 16v40M37 36h20" stroke="#cf2a2f" strokeWidth="5" />
    </g>
    <ellipse cx="36" cy="36" rx="17" ry="19" fill="none" stroke="#111" strokeWidth="1.400" />
    <g fontFamily="Liberation Sans, sans-serif" textAnchor="middle" fill="#111">
      <text x="36" y="15.500" fontSize="10">ACM</text>
      <text x="36" y="63" fontSize="8">1899</text>
    </g>
  </svg>
);

const MadridCrest = () => (
  <svg width="72" height="72" viewBox="0 0 72 72">
    <path d="M21 20c-3-6 0-9 4-10 4-4 8-4 11-4s7 0 11 4c4 1 7 4 4 10z" fill="#d9a93c" />
    <path d="M25 16c0-4 2-5 4-5l3 6 4-7 4 7 3-6c2 0 4 1 4 5z" fill="#b23349" />
    <path d="M36 0v7M33.500 3h5" stroke="#d9a93c" strokeWidth="1.800" />
    <ellipse cx="36" cy="46" rx="24" ry="25" fill="#dcb047" />
    <ellipse cx="36" cy="46" rx="21.500" ry="22.500" fill="#fff" stroke="#3c6ca8" strokeWidth="2" />
    <path d="M18 34l30 32c3-1 5-4 6-6L24 27c-3 2-5 4-6 7z" fill="#2e67a8" />
    <circle cx="36" cy="44" r="13" fill="none" stroke="#dcb047" strokeWidth="3.500" />
    <path d="M23 31l13 15 13-15M32 66V47h10M32 56h8" fill="none" stroke="#dcb047" strokeWidth="3.500" />
  </svg>
);

/* ---------- data ---------- */

const menus = ["File", "Edit", "Lihat", "Histori", "Bookmark", "Profil", "Tab", "Jendela", "Bantuan"];

const categories = [
  { icon: <Ball />, label: "Semua", active: true },
  { icon: <Fire />, label: "Langsung" },
  { icon: <CalendarDay />, label: "Jadwal Hari Ini" },
  { icon: <Target />, label: "ODDS Tinggi" },
  { icon: <Check />, label: "Selesai" },
];

const matches = [
  {
    league: "Premier League",
    badge: <PremierCrest size={60} />,
    accent: "#dc3d37",
    status: "LIVE",
    kind: "live",
    time: (
      <>
        <Stopwatch />
        {"'"}
      </>
    ),
    home: ["Liverpool FC", <LiverpoolCrest />],
    away: ["Manchester United", <UnitedCrest />],
  },
  {
    league: "Bundesliga",
    badge: <BundesligaCrest />,
    accent: "#4a80e8",
    status: "SCHEDULED",
    kind: "scheduled",
    time: "--",
    home: ["Borussia Dortmund", <DortmundCrest />],
    away: ["FC Bayern Munchen", <BayernCrest />],
  },
  {
    league: "Champions League",
    badge: <ChampionsCrest />,
    accent: "#5fc06c",
    status: "FULL TIME",
    kind: "done",
    time: "FT",
    home: ["AC Milan", <MilanCrest />],
    away: ["Real Madrid", <MadridCrest />],
  },
];

const news = [
  "Haaland Cedera, Manchester City Kehilangan Striker Utama",
  "Real Madrid Siapkan Transfer Besar Musim Panas",
  "Inter Milan Kokoh di Puncak Serie A",
];

/* ---------- sections ---------- */

const Desktop = () => (
  <MenuBar>
    <MenuGroup>
      <AppleMark />
      <MenuItem $strong>Chrome</MenuItem>
      {menus.map((m) => (
        <MenuItem key={m}>{m}</MenuItem>
      ))}
    </MenuGroup>
    <TrayGroup>
      <ChatBadge />
      <Burst />
      <CloudMark />
      <PlayMark />
      <span>Johar Arifin</span>
      <Accessibility />
      <Battery>
        100% <BatteryMark />
      </Battery>
      <Wifi />
      <Spotlight />
      <ControlCenter />
      <Clock>
        <span>Sen 15 Jun</span>
        <span>14.20</span>
      </Clock>
    </TrayGroup>
  </MenuBar>
);

const Browser = () => (
  <>
    <TabStrip>
      <Lights>
        <Light $color="#ed6a5e" />
        <Light $color="#e0cfd3" />
        <Light $color="#61c554" />
      </Lights>
      <TabSearch aria-label="Cari tab">
        <Chevron dir="down" size={24} width={4} />
      </TabSearch>
      <Tab>
        <SkullLogo size={24} bare />
        <TabTitle>Syndicate Picks</TabTitle>
        <PlainButton aria-label="Tutup tab">
          <Stroke size={24} width={3}>
            <path d="M5 5l14 14M19 5L5 19" />
          </Stroke>
        </PlainButton>
      </Tab>
      <NewTab aria-label="Tab baru">
        <Stroke size={28} width={2.5}>
          <path d="M12 3v18M3 12h18" />
        </Stroke>
      </NewTab>
      <Gemini>
        <GeminiStar />
        Minta Gemini
      </Gemini>
    </TabStrip>
    <ToolbarBack>
      <Toolbar>
        <ToolbarNav>
          <PlainButton aria-label="Kembali">
            <Stroke size={32} width={2.2}>
              <path d="M21 12H4M12 3.500L3.500 12l8.500 8.500" />
            </Stroke>
          </PlainButton>
          <PlainButton aria-label="Maju" disabled>
            <Stroke size={32} width={2.2}>
              <path d="M3 12h17M12 3.500l8.500 8.500-8.500 8.500" stroke="#a99fa3" />
            </Stroke>
          </PlainButton>
          <PlainButton aria-label="Muat ulang">
            <Stroke size={32} width={2.2}>
              <path d="M20 14a8.500 8.500 0 11-2.500-8l2.500 2.500M20.500 2.500V9H14" />
            </Stroke>
          </PlainButton>
        </ToolbarNav>
        <Omnibox>
          <SiteInfo aria-label="Info situs">
            <Stroke size={30} width={2.2}>
              <circle cx="12" cy="12" r="10" />
              <path d="M12 11v6M12 7v2.200" />
            </Stroke>
          </SiteInfo>
          <Address>
            <b>localhost</b>/admin_syndicate/member/index.php
          </Address>
          <OmniIcons>
            <Translate />
            <Stroke size={34} width={2.2}>
              <path d="M12 3.500l2.500 6 6.500.5-5 4.200 1.600 6.300L12 17.100l-5.600 3.400L8 14.200 3 10l6.500-.5z" />
            </Stroke>
          </OmniIcons>
        </Omnibox>
        <Avatar>K</Avatar>
        <svg width="8" height="28" viewBox="0 0 8 28" fill="#55404a">
          <circle cx="4" cy="4" r="3.200" />
          <circle cx="4" cy="14" r="3.200" />
          <circle cx="4" cy="24" r="3.200" />
        </svg>
      </Toolbar>
    </ToolbarBack>
  </>
);

const SiteHeader = () => (
  <Header>
    <LogoRing href="#" aria-label="Syndicate Picks">
      <SkullLogo size={80} />
      <OnlineDot />
    </LogoRing>
    <Search>
      <SearchInput aria-label="Cari" placeholder="Cari..." />
      <SearchButton type="button" aria-label="Cari">
        <Magnifier />
      </SearchButton>
    </Search>
    <Nav>
      <NavLink href="#" $active>Home</NavLink>
      <NavLink href="#">Membership</NavLink>
      <NavLink href="#">Prediksi</NavLink>
      <NavLink href="#">Hasil</NavLink>
      <NavMenu>
        Support
        <svg width="18" height="16" viewBox="0 0 18 16">
          <path d="M1 0h16L9 16z" fill="#a3abb9" />
        </svg>
      </NavMenu>
      <NavLink href="#">Login</NavLink>
      <Register href="#">Register</Register>
    </Nav>
    <Language>
      <Globe />
      ID
      <Chevron dir="down" size={28} width={2.4} />
    </Language>
  </Header>
);

const Match = ({ m }) => (
  <MatchCard $accent={m.accent}>
    <MatchInfo>
      <LeagueRow>
        <LeagueBadge>{m.badge}</LeagueBadge>
        <div>
          <LeagueName>{m.league}</LeagueName>
          <MatchDate>Tue, 19 May 2026</MatchDate>
        </div>
      </LeagueRow>
      <Status $kind={m.kind}>{m.status}</Status>
      <MatchTime>{m.time}</MatchTime>
    </MatchInfo>
    <Versus>
      <Team>
        {m.home[1]}
        {m.home[0]}
      </Team>
      <Gate>
        <BigLock />
        Premium
        <MembersOnly href="#">Members Only</MembersOnly>
      </Gate>
      <Team>
        {m.away[1]}
        {m.away[0]}
      </Team>
    </Versus>
    <MatchSide>
      <LockedBox>
        LOCKED
        <Padlock />
      </LockedBox>
      <OpenMatch href="#" aria-label={m.league}>
        <Arrow />
      </OpenMatch>
    </MatchSide>
  </MatchCard>
);

export default function App() {
  return (
    <Screen>
      <GlobalStyle />
      <Desktop />
      <Browser />
      <Site>
        <SiteHeader />
        <Page>
          <StatusBar>
            <LiveDot />
            <StatusText>4 PICKS TERSEDIA</StatusText>
            <Ticker>Piala Dunia • ASEAN Cup • Champions League • Europa League</Ticker>
            <DateBox>
              <PlainButton aria-label="Sebelumnya">
                <Chevron dir="left" size={40} width={3} />
              </PlainButton>
              <DateButton>
                <Calendar />
                <DateLabel>Date</DateLabel>
              </DateButton>
              <PlainButton aria-label="Berikutnya">
                <Chevron dir="right" size={40} width={3} />
              </PlainButton>
            </DateBox>
          </StatusBar>
          <Columns>
            <Stack>
              <Panel>
                <PanelTitle>Kategori Prediksi</PanelTitle>
                <CategoryList>
                  {categories.map((c) => (
                    <Category key={c.label} $active={c.active}>
                      {c.icon}
                      {c.label}
                    </Category>
                  ))}
                </CategoryList>
              </Panel>
              <Panel>
                <PanelTitle>Top Leagues</PanelTitle>
                <LeagueList>
                  <LeagueLink href="#">
                    <PremierCrest size={70} />
                    Premier League
                  </LeagueLink>
                  <LeagueLink href="#" aria-label="La Liga">
                    <LaLigaCrest />
                  </LeagueLink>
                </LeagueList>
              </Panel>
            </Stack>
            <div>
              <MatchHead>
                <MatchHeading>Pilihan &amp; Pertandingan</MatchHeading>
                <PremiumTag>
                  <Padlock size={30} />
                  Premium
                </PremiumTag>
              </MatchHead>
              <MatchList>
                {matches.map((m) => (
                  <Match key={m.league} m={m} />
                ))}
              </MatchList>
            </div>
            <Stack>
              <Panel>
                <PanelHead>
                  <PanelHeadTitle>Jadwal</PanelHeadTitle>
                  <Chip>Jadwal Langsung</Chip>
                </PanelHead>
              </Panel>
              <Panel>
                <PanelHead>
                  <PanelHeadTitle>Berita &amp; Update Bola</PanelHeadTitle>
                  <Chip>Terbaru</Chip>
                </PanelHead>
                <ul>
                  {news.map((title) => (
                    <NewsItem key={title}>
                      <Bullet />
                      <div>
                        <NewsTitle>{title}</NewsTitle>
                        <NewsMeta>
                          <NewsDate>08 May 2026</NewsDate>
                          <ReadLink href="#">
                            Baca <Arrow weight={1.8} />
                          </ReadLink>
                        </NewsMeta>
                      </div>
                    </NewsItem>
                  ))}
                </ul>
              </Panel>
            </Stack>
          </Columns>
        </Page>
      </Site>
    </Screen>
  );
}
